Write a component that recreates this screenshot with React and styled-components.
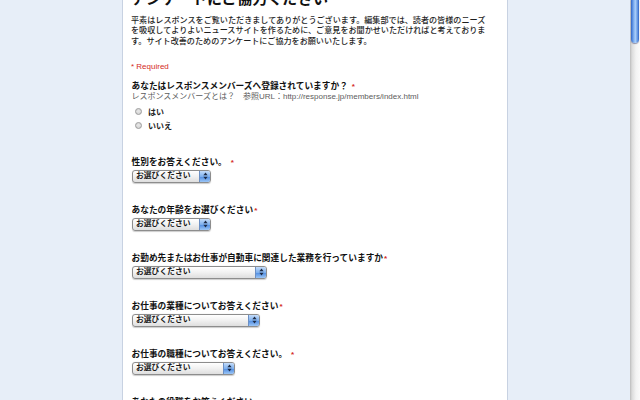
import React from "react";
import styled, { createGlobalStyle } from "styled-components";

const GlobalStyle = createGlobalStyle`
  html, body {
    margin: 0;
    padding: 0;
    background: #e7eef8;
    overflow: hidden;
  }
  body {
    font-family: "Liberation Sans", "Noto Sans CJK JP", sans-serif;
  }
`;

const questions = [
  { label: "性別をお答えください。", gap: true, width: 79 },
  { label: "あなたの年齢をお選びください", width: 79 },
  { label: "お勤め先またはお仕事が自動車に関連した業務を行っていますか", width: 135 },
  { label: "お仕事の業種についてお答えください", width: 128 },
  { label: "お仕事の職種についてお答えください。", gap: true, width: 103 },
  { label: "あなたの役職をお答えください。", gap: true, width: 103 },
];

const Window = styled.div`
  display: flex;
  height: 400px;
  overflow: hidden;
`;

const Viewport = styled.div`
  flex: 1;
  display: flex;
  justify-content: center;
  overflow: hidden;
`;

const Panel = styled.div`
  width: 386px;
  box-sizing: border-box;
  margin-top: -10.5px;
  padding: 0 16px 0 8px;
  background: #fff;
  border-left: 1px solid #c8d2e2;
  border-right: 1px solid #c8d2e2;
  color: #111;
`;

const Title = styled.h1`
  margin: 0;
  font-size: 15px;
  line-height: 18px;
  letter-spacing: 0.2px;
  font-weight: 700;
  padding-left: 0.5px;
`;

const Intro = styled.p`
  width: 360px;
  margin: 8px 0 0;
  font-size: 8.1px;
  line-height: 10.5px;
  font-weight: 500;
  color: #1e1e1e;
`;

const Required = styled.div`
  margin-top: 15px;
  font-size: 8px;
  line-height: 10px;
  color: #d42a1e;
`;

const Question = styled.div`
  margin-top: ${(p) => p.$top}px;
`;

const Label = styled.div`
  font-size: 8.7px;
  line-height: 11px;
  font-weight: 700;
  color: #111;
  white-space: nowrap;
  padding-left: 0.5px;
`;

const Star = styled.span`
  color: #d42a1e;
  margin-left: ${(p) => (p.$gap ? "4px" : "1px")};
  font-size: 8px;
`;

const Help = styled.div`
  font-size: 8px;
  line-height: 10px;
  color: #5c5c5c;
  padding-left: 0.5px;
  white-space: nowrap;
`;

const RadioList = styled.div`
  margin-top: 3px;
  display: flex;
  flex-direction: column;
`;

const RadioRow = styled.label`
  display: flex;
  align-items: center;
  gap: 6px;
  height: 14px;
  padding-left: 4px;
  font-size: 8px;
  font-weight: 700;
  color: #222;
`;

const RadioDot = styled.span`
  width: 7px;
  height: 7px;
  border-radius: 50%;
  box-sizing: border-box;
  border: 1px solid #9a9a9a;
  background: linear-gradient(#f4f4f4, #d4d4d4);
  box-shadow: inset 0 1px 1px rgba(0, 0, 0, 0.12);
`;

const SelectBox = styled.div`
  margin-top: 2.5px;
  margin-left: 1px;
  height: 12.5px;
  display: flex;
  box-sizing: border-box;
  border: 1px solid #8d8d8d;
  border-radius: 3px;
  overflow: hidden;
  background: linear-gradient(#ffffff, #f1f1f1 50%, #dedede);
  box-shadow: 0 0.5px 1px rgba(0, 0, 0, 0.2);
`;

const SelectValue = styled.span`
  flex: 1;
  font-size: 7.8px;
  line-height: 10.5px;
  font-weight: 700;
  color: #1a1a1a;
  padding-left: 3px;
  white-space: nowrap;
  overflow: hidden;
`;

const ArrowCap = styled.span`
  width: 10px;
  display: flex;
  align-items: center;
  justify-content: center;
  border-left: 1px solid #6b8fc4;
  background: linear-gradient(#c4dcfa, #7eb0ee 50%, #4d8ae0 51%, #9cc6f6);
`;

const Scrollbar = styled.div`
  width: 10px;
  flex: none;
  background: linear-gradient(to right, #bcbcbc, #dcdcdc 20%, #f3f3f3 60%, #fafafa);
`;

const Thumb = styled.div`
  margin: 0 1px;
  height: 43px;
  border-radius: 0 0 5px 5px;
  background: linear-gradient(to right, #2f66c8, #7fb0f2 35%, #a9cdf8 55%, #5a8fe0 85%, #2e5fbf);
  box-shadow: 0 1px 1px rgba(0, 0, 60, 0.4);
`;

const Arrows = () => (
  <svg width="5" height="8" viewBox="0 0 5 8">
    <path d="M2.5 0.5 L4.6 3.2 L0.4 3.2 Z" fill="#1d2a44" />
    <path d="M2.5 7.5 L4.6 4.8 L0.4 4.8 Z" fill="#1d2a44" />
  </svg>
);

const Select = ({ width }) => (
  <SelectBox style={{ width }}>
    <SelectValue>お選びください</SelectValue>
    <ArrowCap>
      <Arrows />
    </ArrowCap>
  </SelectBox>
);

export default function App() {
  return (
    <>
      <GlobalStyle />
      <Window>
        <Viewport>
          <Panel>
            <Title>アンケートにご協力ください</Title>
            <Intro>
              平素はレスポンスをご覧いただきましてありがとうございます。編集部では、読者の皆様のニーズを吸収してよりよいニュースサイトを作るために、ご意見をお聞かせいただければと考えております。サイト改善のためのアンケートにご協力をお願いいたします。
            </Intro>
            <Required>* Required</Required>

            <Question $top={8.5}>
              <Label>
                あなたはレスポンスメンバーズへ登録されていますか？<Star $gap>*</Star>
              </Label>
              <Help>
                レスポンスメンバーズとは？　参照URL：http://response.jp/members/index.html
              </Help>
              <RadioList>
                <RadioRow>
                  <RadioDot />
                  はい
                </RadioRow>
                <RadioRow>
                  <RadioDot />
                  いいえ
                </RadioRow>
              </RadioList>
            </Question>

            {questions.map((q, i) => (
              <Question key={q.label} $top={i === 0 ? 24 : 22}>
                <Label>
                  {q.label}
                  <Star $gap={q.gap}>*</Star>
                </Label>
                <Select width={q.width} />
              </Question>
            ))}
          </Panel>
        </Viewport>
        <Scrollbar>
          <Thumb />
        </Scrollbar>
      </Window>
    </>
  );
}
